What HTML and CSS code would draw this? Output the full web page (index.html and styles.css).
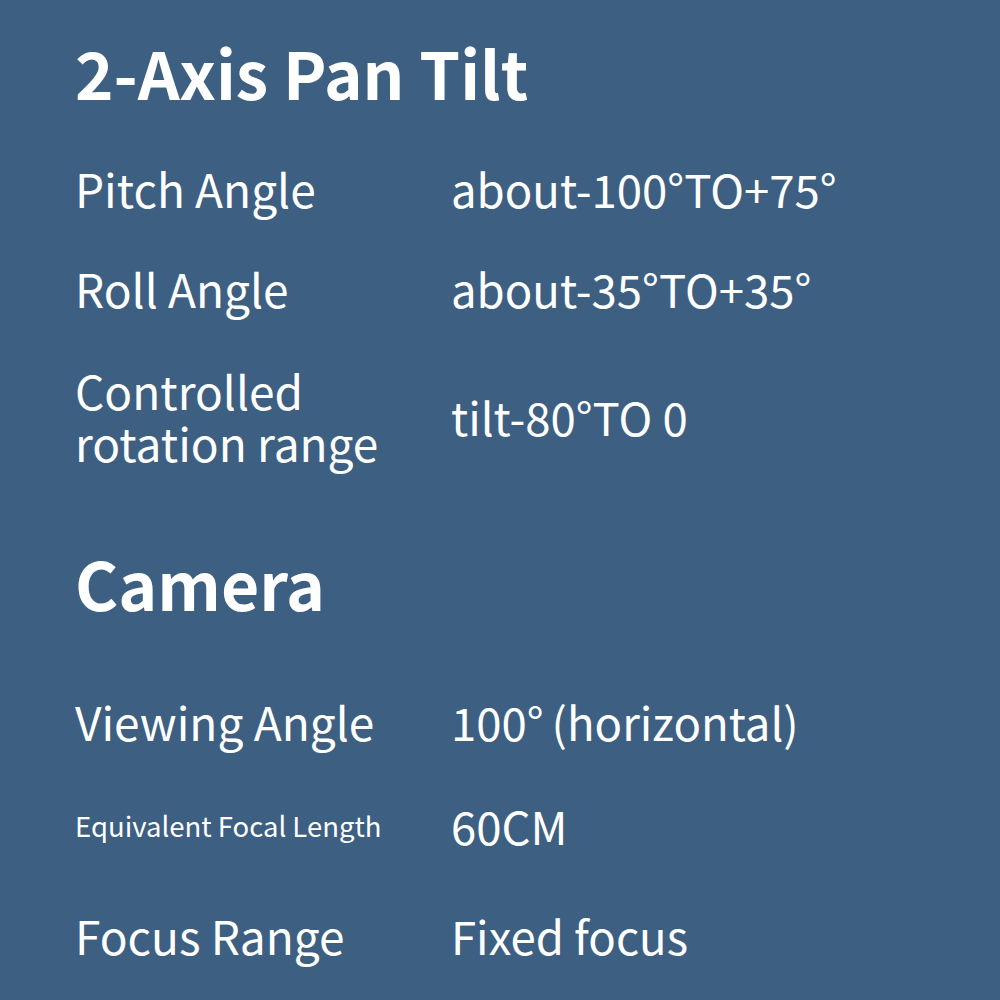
FILE: index.html
```html
<!DOCTYPE html>
<html>
<head>
<meta charset="utf-8">
<link rel="stylesheet" href="styles.css">
</head>
<body>
<div class="page">
  <h1 class="title">2-Axis Pan Tilt</h1>
  <div class="spec">
    <div class="row r1"><div class="label">Pitch Angle</div><div class="value">about-100°TO+75°</div></div>
    <div class="row r2"><div class="label">Roll Angle</div><div class="value">about-35°TO+35°</div></div>
    <div class="row r3"><div class="label two">Controlled<br>rotation range</div><div class="value">tilt-80°TO 0</div></div>
  </div>
  <h1 class="title cam">Camera</h1>
  <div class="spec">
    <div class="row r4"><div class="label">Viewing Angle</div><div class="value">100°<span class="paren">(horizontal)</span></div></div>
    <div class="row r5"><div class="label small">Equivalent Focal Length</div><div class="value">60CM</div></div>
    <div class="row r6"><div class="label">Focus Range</div><div class="value">Fixed focus</div></div>
  </div>
</div>
</body>
</html>
```

FILE: styles.css
```css
html, body {
  margin: 0;
  padding: 0;
  background: #3d5f82;
}
.page {
  width: 1000px;
  height: 1000px;
  box-sizing: border-box;
  padding: 39px 0 0 75px;
  color: #ffffff;
  font-family: "Noto Sans CJK SC", "Noto Sans", sans-serif;
}
.title {
  margin: 0;
  font-size: 65.4px;
  line-height: 66px;
  font-weight: 700;
}
.cam {
  margin-top: 54px;
  font-size: 66px;
  line-height: 68px;
}
.spec {
  display: flex;
  flex-direction: column;
}
.title + .spec {
  margin-top: 33px;
}
.cam + .spec {
  margin-top: 54px;
}
.row {
  display: grid;
  grid-template-columns: 376px 1fr;
  align-items: center;
  font-size: 46px;
  line-height: 46px;
}
.value {
  font-size: 45.5px;
}
.paren {
  margin-left: 8px;
}
.r1, .r2 { height: 100px; }
.r3 { height: 156px; }
.r4 { height: 102px; }
.r5 { height: 106px; }
.r6 { height: 114px; }
.label.two {
  line-height: 52px;
}
.label.small {
  font-size: 27.5px;
  line-height: 28px;
}
```
